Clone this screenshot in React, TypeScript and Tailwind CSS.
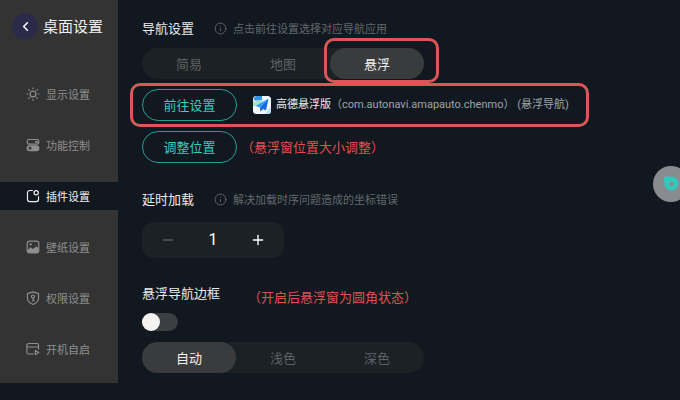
import { useState } from 'react';
import type { ReactNode } from 'react';
import { ChevronLeft, Info, Minus, Plus } from 'lucide-react';

const svgProps = {
  viewBox: '0 0 24 24',
  fill: 'none',
  stroke: 'currentColor',
  strokeWidth: 2,
  strokeLinecap: 'round',
  strokeLinejoin: 'round',
  className: 'size-3.5 shrink-0',
  'aria-hidden': true,
} as const;

const NAV = [
  {
    label: '显示设置',
    icon: (
      <svg {...svgProps}>
        <circle cx="12" cy="12" r="5" />
        <path d="M12 1.5v1.5M12 21v1.5M1.5 12H3M21 12h1.5M4.6 4.6l1 1M18.4 18.4l1 1M4.6 19.4l1-1M18.4 5.6l1-1" />
      </svg>
    ),
  },
  {
    label: '功能控制',
    icon: (
      <svg {...svgProps}>
        <rect x="2" y="2.5" width="20" height="8" rx="3" />
        <path d="M17 5.500h2v2h-2z" />
        <rect x="2" y="13.500" width="20" height="8" rx="4" fill="currentColor" />
        <circle cx="7" cy="17.500" r="1.500" stroke="#333333" />
      </svg>
    ),
  },
  {
    label: '插件设置',
    icon: (
      <svg {...svgProps}>
        <path d="M11 2.500H6.500a4 4 0 0 0-4 4v11a4 4 0 0 0 4 4h11a4 4 0 0 0 4-4V13" />
        <circle cx="17.500" cy="6.500" r="3.700" />
      </svg>
    ),
  },
  {
    label: '壁纸设置',
    icon: (
      <svg {...svgProps}>
        <rect x="2" y="2" width="20" height="20" rx="4.500" />
        <path d="M3 17l4.500-4.500 4.500 3 6-5 3.500 4V19l-2 2.500H5L3 20z" fill="currentColor" stroke="none" />
        <circle cx="8" cy="7.500" r="1" />
      </svg>
    ),
  },
  {
    label: '权限设置',
    icon: (
      <svg {...svgProps}>
        <path d="M12 1.500l9.500 3v8c0 5-4.500 8.500-9.500 10.500-5-2-9.500-5.500-9.500-10.500v-8z" />
        <circle cx="12" cy="9.500" r="2.700" />
        <path d="M12 12.500v5M12 15.500h2" />
      </svg>
    ),
  },
  {
    label: '开机自启',
    icon: (
      <svg {...svgProps}>
        <path d="M12.500 20.500H4.500a3 3 0 0 1-3-3v-12a3 3 0 0 1 3-3h14a3 3 0 0 1 3 3V12M1.500 8.500h20" />
        <path d="M16 14.500l6 3.500-6 3.500z" />
      </svg>
    ),
  },
];

function AmapIcon() {
  return (
    <svg viewBox="0 0 36 36" className="size-[18px] shrink-0" aria-hidden="true">
      <rect width="36" height="36" rx="7" fill="#f2f8fd" />
      <path d="M2 4a7 7 0 0 1 5-4h11v9H2z" fill="#2f95e8" />
      <path d="M0 12l14-3 8-4-6 9L4 20l-4 1z" fill="#a5e3c4" />
      <path d="M36 22v7a7 7 0 0 1-7 7h-6z" fill="#b8e2f8" />
      <path d="M31 5L5 20l9 3z" fill="#2d9bfa" />
      <path d="M31 5L14 23l12 6z" fill="#126be8" />
      <path d="M14 23l1 8 5-5z" fill="#0c50c4" />
    </svg>
  );
}

function SectionTitle({ title, hint }: { title: string; hint?: string }) {
  return (
    <div className="flex h-5 items-center">
      <h2 className="text-[13px] text-[#e8eaeb]">{title}</h2>
      {hint && (
        <p className="ml-5 flex items-center gap-1.5 text-[11px] leading-4 text-[#63686c]">
          <Info size={13} strokeWidth={1.7} />
          {hint}
        </p>
      )}
    </div>
  );
}

type SegmentedProps = {
  name: string;
  label: string;
  options: string[];
  initial: string;
  marked?: string;
};

function Segmented({ name, label, options, initial, marked }: SegmentedProps) {
  const [value, setValue] = useState(initial);
  return (
    <div
      role="radiogroup"
      aria-label={label}
      className="grid w-full max-w-[282px] grid-cols-3 rounded-full bg-[#1b2124]"
    >
      {options.map((option) => (
        <label
          key={option}
          className="relative flex h-[31px] cursor-pointer items-center justify-center rounded-full text-[13px] leading-4 text-[#5e6366] has-checked:bg-[#393b3c] has-checked:text-[#f0f1f1]"
        >
          <input
            type="radio"
            name={name}
            className="absolute inset-0 cursor-pointer appearance-none rounded-full"
            checked={value === option}
            onChange={() => setValue(option)}
          />
          {option}
          {option === marked && (
            <span className="pointer-events-none absolute -top-2.5 -right-[15px] -bottom-1 -left-1.5 rounded-[10px] border-3 border-[#dc5658]" />
          )}
        </label>
      ))}
    </div>
  );
}

function OutlineButton({ children }: { children: ReactNode }) {
  return (
    <button
      type="button"
      className="h-8 w-[95px] shrink-0 rounded-full border border-[#279c92] text-[13px] text-[#35cbbd]"
    >
      {children}
    </button>
  );
}

function Stepper() {
  const [seconds, setSeconds] = useState(1);
  return (
    <div className="mt-[13px] grid h-9 w-[142px] grid-cols-3 items-center justify-items-center rounded-xl bg-[#1b2124] px-1">
      <button type="button" aria-label="减少" className="text-[#707477]" onClick={() => setSeconds(Math.max(1, seconds - 1))}>
        <Minus size={16} strokeWidth={1.5} />
      </button>
      <output className="font-[Roboto,sans-serif] text-base text-white">{seconds}</output>
      <button type="button" aria-label="增加" className="text-white" onClick={() => setSeconds(seconds + 1)}>
        <Plus size={16} strokeWidth={2} />
      </button>
    </div>
  );
}

export default function App() {
  const [active, setActive] = useState('插件设置');

  return (
    <div className="relative flex min-h-screen items-start overflow-hidden bg-[#11181f] font-['Noto_Sans_CJK_SC',sans-serif]">
      <aside className="w-[118px] shrink-0 bg-[#333333] pb-5">
        <header className="flex h-[52px] items-center gap-[5px] pl-3">
          <button
            type="button"
            aria-label="返回"
            className="flex size-[26px] shrink-0 items-center justify-center rounded-full bg-[#2b2b49] text-white"
          >
            <ChevronLeft size={15} strokeWidth={2.5} />
          </button>
          <h1 className="text-[15px] leading-5 whitespace-nowrap text-[#f0f0f0]">桌面设置</h1>
        </header>
        <nav className="mt-7 flex flex-col gap-[23px]">
          {NAV.map(({ label, icon }) => (
            <a
              key={label}
              href="#"
              onClick={() => setActive(label)}
              className={`flex h-7 items-center gap-1.5 pl-[26px] text-[11px] leading-4 ${
                label === active ? 'bg-[#11181f] text-[#f0f1f1]' : 'text-[#8f8f8f]'
              }`}
            >
              {icon}
              {label}
            </a>
          ))}
        </nav>
      </aside>

      <main className="min-w-0 flex-1 pt-[18px] pr-10 pl-6">
        <section>
          <SectionTitle title="导航设置" hint="点击前往设置选择对应导航应用" />
          <div className="mt-2.5">
            <Segmented
              name="nav-mode"
              label="导航设置"
              options={['简易', '地图', '悬浮']}
              initial="悬浮"
              marked="悬浮"
            />
          </div>
          <div className="relative mt-2.5 flex w-fit items-center">
            <OutlineButton>前往设置</OutlineButton>
            <div className="ml-4 flex items-center font-[Roboto,'Noto_Sans_CJK_SC',sans-serif] text-[11px] whitespace-nowrap text-[#a0a4a7]">
              <AmapIcon />
              <span className="ml-[5px] text-[#eceeee]">高德悬浮版</span>
              <span>（com.autonavi.amapauto.chenmo） (悬浮导航)</span>
            </div>
            <span className="pointer-events-none absolute -top-1.5 -right-5 -bottom-1.5 -left-3 rounded-[10px] border-3 border-[#dc5658]" />
          </div>
          <div className="mt-2.5 flex items-center">
            <OutlineButton>调整位置</OutlineButton>
            <p className="ml-1 text-[13px] text-[#e04f52]">（悬浮窗位置大小调整）</p>
          </div>
        </section>

        <section className="mt-[26px]">
          <SectionTitle title="延时加载" hint="解决加载时序问题造成的坐标错误" />
          <Stepper />
        </section>

        <section className="mt-[25px]">
          <div className="flex h-6 items-start gap-7">
            <SectionTitle title="悬浮导航边框" />
            <p className="mt-1 text-[13px] leading-5 text-[#e04f52]">（开启后悬浮窗为圆角状态）</p>
          </div>
          <label className="relative mt-1.5 flex h-[18px] w-9 cursor-pointer rounded-full bg-[#3c3f41] has-checked:justify-end has-checked:bg-[#279c92]">
            <input
              type="checkbox"
              aria-label="悬浮导航边框"
              className="absolute inset-0 cursor-pointer appearance-none rounded-full"
            />
            <span className="size-[18px] rounded-full bg-[#f4f3f1]" />
          </label>
          <div className="mt-[11px]">
            <Segmented name="theme" label="边框颜色" options={['自动', '浅色', '深色']} initial="自动" />
          </div>
        </section>
      </main>

      {/* floating assistant, docked half off the right edge */}
      <button
        type="button"
        aria-label="悬浮助手"
        className="absolute top-[166px] -right-[9px] flex size-9 items-center justify-center rounded-full bg-[#898b8e]"
      >
        <svg viewBox="0 0 16 16" className="size-4" aria-hidden="true">
          <path d="M1 2q0-1.500 1.500-1.500H8.500a7 7 0 1 1-7 8z" fill="#32c9bd" />
          <circle cx="8.500" cy="8" r="2.300" fill="#898b8e" />
        </svg>
      </button>
    </div>
  );
}
